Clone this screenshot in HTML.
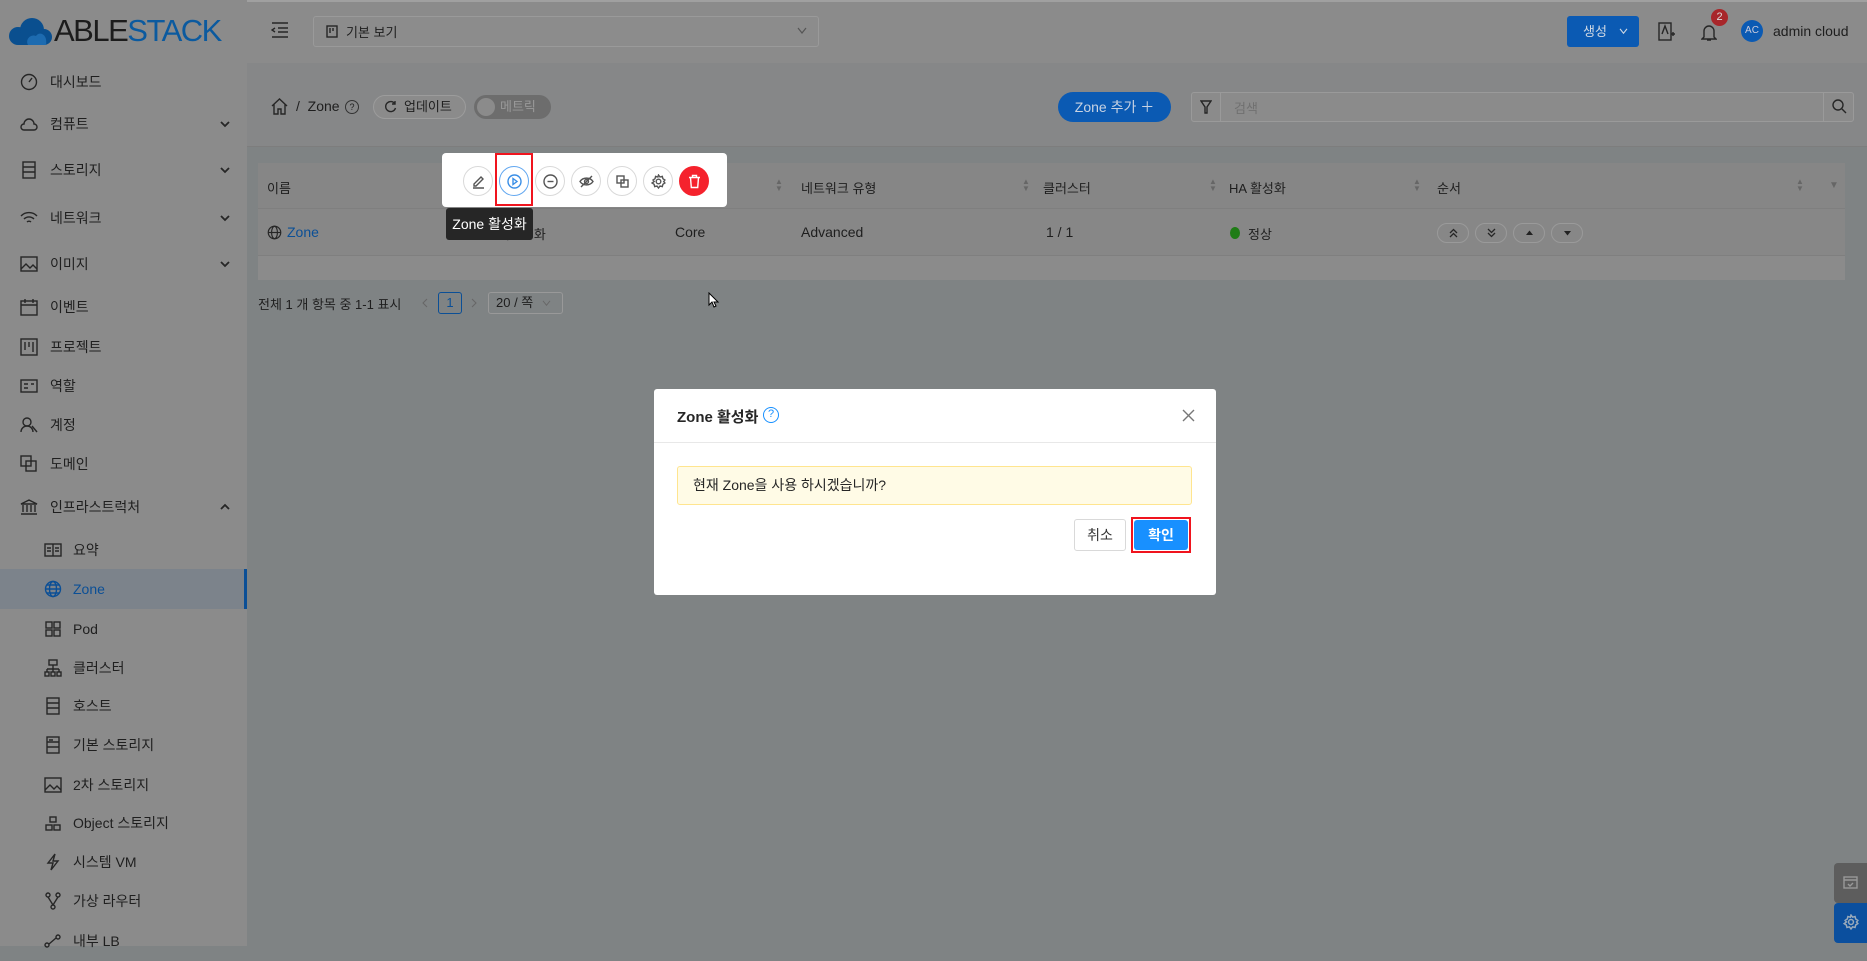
<!DOCTYPE html>
<html><head><meta charset="utf-8"><style>
*{box-sizing:border-box;margin:0;padding:0}
body{width:1867px;height:946px;overflow:hidden;background:#7f8384;font-family:"Liberation Sans","Noto Sans CJK KR",sans-serif;color:#1e1e1e;position:relative;font-size:14px}
.abs{position:absolute}
#side{left:0;top:0;width:247px;height:946px;background:#8b8b8b}
#hdr{left:247px;top:0;width:1620px;height:63px;background:#8b8b8b;border-top:2px solid #a0a0a0}
.it{position:absolute;left:0;width:247px;height:40px;display:flex;align-items:center;font-size:14px;color:#1f1f1f}
.it svg{position:absolute;left:20px;width:18px;height:18px}
.it span{position:absolute;left:50px}
.it.sub svg{left:44px}
.it.sub span{left:73px}
.it svg.chev{left:220px;width:10px;height:10px;stroke-width:1.8}
svg{fill:none;stroke:#262626;stroke-width:1.4}
.btn{position:absolute;border-radius:50%;width:30px;height:30px;border:1px solid #d9d9d9;background:#fff;top:166px}
.btn svg{position:absolute;left:7px;top:7px;width:15px;height:15px;stroke:#555}
.ob{position:absolute;top:223px;width:32px;height:20px;border:1px solid #9a9a9a;border-radius:10px}
.ob svg{position:absolute;left:11px;top:4px;width:9px;height:10px;stroke-width:1.3}
</style></head><body>
<div id="side" class="abs"></div>
<div id="hdr" class="abs"></div>
<!-- logo -->
<svg class="abs" style="left:6px;top:17px;width:48px;height:30px;stroke:none" viewBox="0 0 48 30"><circle cx="12" cy="19" r="9" fill="#0a4f8f"/><circle cx="26" cy="13" r="12" fill="#0a4f8f"/><circle cx="38" cy="20" r="8" fill="#0a4f8f"/><rect x="12" y="18" width="26" height="10" fill="#0a4f8f"/><path d="M22 28c-3-6 3-11 8-9 3-5 12-2 10 9z" fill="#1d6bb0"/></svg>
<div class="abs" style="left:54px;top:13px;font-size:31px;letter-spacing:-1.5px;color:#1c1c1c">ABLE<span style="color:#0b5a9f">STACK</span></div>
<!-- menu icon -->
<svg class="abs" style="left:271px;top:21px;width:18px;height:18px" viewBox="0 0 18 18"><path d="M1 2h16M7 7h10M7 11h10M1 16h16M4 7l-3 2 3 2"/></svg>
<div class="abs" style="left:313px;top:16px;width:506px;height:31px;border:1px solid #9a9a9a;border-radius:3px;background:#8c8c8c"></div>
<svg class="abs" style="left:326px;top:25px;width:12px;height:13px" viewBox="0 0 12 13"><rect x="1" y="1" width="10" height="11"/><path d="M4 3v5M7 3v3"/></svg>
<div class="abs" style="left:346px;top:22px;font-size:13px">기본 보기</div>
<svg class="abs" style="left:797px;top:27px;width:10px;height:8px;stroke:#555;stroke-width:1.2" viewBox="0 0 10 8"><path d="M1 1l4 5 4-5"/></svg>
<div class="abs" style="left:1567px;top:16px;width:72px;height:31px;background:#0b5ab3;border-radius:3px;color:#cfd8e3;font-size:13px;line-height:31px;padding-left:16px">생성</div>
<svg class="abs" style="left:1619px;top:28px;width:9px;height:7px;stroke:#cfd8e3;stroke-width:1.2" viewBox="0 0 10 8"><path d="M1 1l4 5 4-5"/></svg>
<svg class="abs" style="left:1658px;top:22px;width:18px;height:20px" viewBox="0 0 18 20"><rect x="1" y="1" width="12" height="17"/><path d="M4 12l3-8 3 8M13 12h4M15 10v4"/></svg>
<svg class="abs" style="left:1701px;top:23px;width:16px;height:19px" viewBox="0 0 16 19"><path d="M3 14V8a5 5 0 0 1 10 0v6l2 2H1zM6 17h4"/></svg>
<div class="abs" style="left:1711px;top:9px;width:17px;height:17px;border-radius:50%;background:#a8262a;color:#ddd;font-size:11px;text-align:center;line-height:17px">2</div>
<div class="abs" style="left:1741px;top:20px;width:22px;height:22px;border-radius:50%;background:#0b5ab3;color:#ccd;font-size:10px;text-align:center;line-height:22px">AC</div>
<div class="abs" style="left:1773px;top:23px;font-size:14px">admin cloud</div>
<!-- sidebar items -->
<div class="it" style="top:62px"><svg viewBox="0 0 18 18"><circle cx="9" cy="9" r="7.5"/><path d="M9 9l3-4"/></svg><span>대시보드</span></div>
<div class="it" style="top:104px"><svg viewBox="0 0 18 18"><path d="M4 15a3 3 0 0 1 0-6 5 5 0 0 1 10 0 3 3 0 0 1 0 6z"/></svg><span>컴퓨트</span><svg class="chev" viewBox="0 0 10 10"><path d="M1 3l4 4 4-4"/></svg></div>
<div class="it" style="top:150px"><svg viewBox="0 0 18 18"><rect x="3" y="1" width="12" height="16"/><path d="M3 6h12M3 11h12"/></svg><span>스토리지</span><svg class="chev" viewBox="0 0 10 10"><path d="M1 3l4 4 4-4"/></svg></div>
<div class="it" style="top:198px"><svg viewBox="0 0 18 18"><path d="M1 7a11 11 0 0 1 16 0M4 10a7 7 0 0 1 10 0M7 13a3 3 0 0 1 4 0"/></svg><span>네트워크</span><svg class="chev" viewBox="0 0 10 10"><path d="M1 3l4 4 4-4"/></svg></div>
<div class="it" style="top:244px"><svg viewBox="0 0 18 18"><rect x="1" y="2" width="16" height="14"/><path d="M1 14l5-5 4 4 3-3 4 4"/></svg><span>이미지</span><svg class="chev" viewBox="0 0 10 10"><path d="M1 3l4 4 4-4"/></svg></div>
<div class="it" style="top:287px"><svg viewBox="0 0 18 18"><rect x="1" y="3" width="16" height="14"/><path d="M5 1v4M13 1v4M1 7h16"/></svg><span>이벤트</span></div>
<div class="it" style="top:327px"><svg viewBox="0 0 18 18"><rect x="1" y="1" width="16" height="16"/><path d="M5 4v8M9 4v5M13 4v10"/></svg><span>프로젝트</span></div>
<div class="it" style="top:366px"><svg viewBox="0 0 18 18"><rect x="1" y="3" width="16" height="12"/><path d="M4 7h4M4 11h4M11 7h3"/></svg><span>역할</span></div>
<div class="it" style="top:405px"><svg viewBox="0 0 18 18"><circle cx="7" cy="6" r="4"/><path d="M1 16a6 6 0 0 1 12 0M12 10l5 6"/></svg><span>계정</span></div>
<div class="it" style="top:444px"><svg viewBox="0 0 18 18"><rect x="1" y="1" width="10" height="10"/><rect x="6" y="6" width="10" height="10"/></svg><span>도메인</span></div>
<div class="it" style="top:487px"><svg viewBox="0 0 18 18"><path d="M1 6l8-4 8 4zM3 7v7M7 7v7M11 7v7M15 7v7M1 16h16"/></svg><span>인프라스트럭처</span><svg class="chev" viewBox="0 0 10 10"><path d="M1 7l4-4 4 4"/></svg></div>
<div class="it sub" style="top:530px"><svg viewBox="0 0 18 18"><rect x="1" y="3" width="16" height="12"/><path d="M9 3v12M3 7h4M11 7h4M3 10h4M11 10h4"/></svg><span>요약</span></div>
<div class="abs" style="left:0;top:569px;width:247px;height:40px;background:#7c838b;border-right:3px solid #0b4f96"></div>
<div class="it sub" style="top:569px;color:#0b4f96"><svg viewBox="0 0 18 18" style="stroke:#0b4f96"><circle cx="9" cy="9" r="7.5"/><ellipse cx="9" cy="9" rx="3.5" ry="7.5"/><path d="M1.5 9h15M3 5h12M3 13h12"/></svg><span>Zone</span></div>
<div class="it sub" style="top:609px"><svg viewBox="0 0 18 18"><rect x="2" y="2" width="6" height="6"/><rect x="10" y="2" width="6" height="6"/><rect x="2" y="10" width="6" height="6"/><rect x="10" y="10" width="6" height="6"/></svg><span>Pod</span></div>
<div class="it sub" style="top:648px"><svg viewBox="0 0 18 18"><rect x="5" y="1" width="8" height="5"/><path d="M9 6v4M3 10h12M3 10v3M9 10v3M15 10v3"/><rect x="1" y="13" width="4" height="4"/><rect x="7" y="13" width="4" height="4"/><rect x="13" y="13" width="4" height="4"/></svg><span>클러스터</span></div>
<div class="it sub" style="top:686px"><svg viewBox="0 0 18 18"><rect x="3" y="1" width="12" height="16"/><path d="M3 6h12M3 11h12"/></svg><span>호스트</span></div>
<div class="it sub" style="top:725px"><svg viewBox="0 0 18 18"><rect x="3" y="1" width="12" height="16"/><path d="M3 6h12M3 11h12M5 4h4"/></svg><span>기본 스토리지</span></div>
<div class="it sub" style="top:765px"><svg viewBox="0 0 18 18"><rect x="1" y="2" width="16" height="14"/><path d="M1 14l5-5 4 4 3-3 4 4"/></svg><span>2차 스토리지</span></div>
<div class="it sub" style="top:803px"><svg viewBox="0 0 18 18"><rect x="6" y="3" width="6" height="5"/><rect x="2" y="11" width="6" height="5"/><rect x="10" y="11" width="6" height="5"/></svg><span>Object 스토리지</span></div>
<div class="it sub" style="top:842px"><svg viewBox="0 0 18 18"><path d="M11 1L4 10h5l-2 7 7-9H9z"/></svg><span>시스템 VM</span></div>
<div class="it sub" style="top:881px"><svg viewBox="0 0 18 18"><circle cx="4" cy="3" r="2"/><circle cx="14" cy="3" r="2"/><circle cx="9" cy="15" r="2"/><path d="M4 5l5 8M14 5l-5 8"/></svg><span>가상 라우터</span></div>
<div class="it sub" style="top:921px"><svg viewBox="0 0 18 18"><circle cx="3" cy="13" r="2"/><circle cx="14" cy="5" r="2"/><path d="M5 12l7-6"/></svg><span>내부 LB</span></div>
<!-- page header -->
<div class="abs" style="left:247px;top:63px;width:1620px;height:84px;background:#868788;border-bottom:1px solid #7d7d7d"></div>
<svg class="abs" style="left:271px;top:98px;width:17px;height:17px" viewBox="0 0 17 17"><path d="M1 8l7.5-7 7.5 7M3 6v10h4v-5h3v5h4V6"/></svg>
<div class="abs" style="left:296px;top:98px;font-size:14px">/&nbsp;&nbsp;Zone</div>
<div class="abs" style="left:345px;top:100px;width:14px;height:14px;border:1px solid #333;border-radius:50%;font-size:9px;text-align:center;line-height:12px">?</div>
<div class="abs" style="left:373px;top:95px;width:93px;height:24px;border:1px solid #9c9c9c;border-radius:12px;background:#8b8b8b;font-size:13px;line-height:22px;padding-left:30px">업데이트</div>
<svg class="abs" style="left:384px;top:100px;width:13px;height:13px" viewBox="0 0 13 13"><path d="M11 4A5 5 0 1 0 11.5 8M11 1v3H8"/></svg>
<div class="abs" style="left:474px;top:95px;width:77px;height:24px;border-radius:12px;background:#6d6d6d;color:#999;font-size:13px;line-height:24px;padding-left:26px">메트릭</div>
<div class="abs" style="left:477px;top:98px;width:18px;height:18px;border-radius:50%;background:#8b8b8b"></div>
<div class="abs" style="left:1058px;top:92px;width:113px;height:30px;border-radius:15px;background:#0b5ab3;color:#c8d3e3;font-size:14px;line-height:30px;text-align:center">Zone 추가 ＋</div>
<div class="abs" style="left:1191px;top:92px;width:663px;height:30px;border:1px solid #9a9a9a;border-radius:3px;background:#8b8b8b"></div>
<div class="abs" style="left:1191px;top:92px;width:30px;height:30px;border-right:1px solid #9a9a9a"></div>
<svg class="abs" style="left:1200px;top:100px;width:12px;height:14px" viewBox="0 0 12 14"><path d="M1 1h10L7 7v6H5V7z"/></svg>
<div class="abs" style="left:1234px;top:98px;font-size:13px;color:#707070">검색</div>
<div class="abs" style="left:1823px;top:92px;width:31px;height:30px;border-left:1px solid #9a9a9a"></div>
<svg class="abs" style="left:1832px;top:99px;width:15px;height:15px" viewBox="0 0 15 15"><circle cx="6" cy="6" r="5"/><path d="M10 10l4 4"/></svg>
<!-- table -->
<div class="abs" style="left:258px;top:163px;width:1587px;height:117px;background:#8b8b8b"></div>
<div class="abs" style="left:258px;top:163px;width:1587px;height:46px;background:#868686;border-bottom:1px solid #7f7f7f"></div>
<div class="abs" style="left:258px;top:209px;width:1587px;height:47px;background:#878787;border-bottom:1px solid #7f7f7f"></div>
<div class="abs" style="left:267px;top:178px;font-size:13px">이름</div>
<div class="abs" style="left:801px;top:178px;font-size:13px">네트워크 유형</div>
<div class="abs" style="left:1043px;top:178px;font-size:13px">클러스터</div>
<div class="abs" style="left:1229px;top:178px;font-size:13px">HA 활성화</div>
<div class="abs" style="left:1437px;top:178px;font-size:13px">순서</div>
<div class="abs" style="left:775px;top:178px;font-size:8px;line-height:7px;color:#666">▲<br>▼</div>
<div class="abs" style="left:1022px;top:178px;font-size:8px;line-height:7px;color:#666">▲<br>▼</div>
<div class="abs" style="left:1209px;top:178px;font-size:8px;line-height:7px;color:#666">▲<br>▼</div>
<div class="abs" style="left:1413px;top:178px;font-size:8px;line-height:7px;color:#666">▲<br>▼</div>
<div class="abs" style="left:1796px;top:178px;font-size:8px;line-height:7px;color:#666">▲<br>▼</div>
<div class="abs" style="left:1829px;top:180px;font-size:10px;color:#666">▼</div>
<svg class="abs" style="left:267px;top:225px;width:15px;height:15px" viewBox="0 0 18 18"><circle cx="9" cy="9" r="7.5"/><ellipse cx="9" cy="9" rx="3.5" ry="7.5"/><path d="M1.5 9h15"/></svg>
<div class="abs" style="left:287px;top:224px;font-size:14px;color:#0b4f96">Zone</div>
<div class="abs" style="left:482px;top:227px;width:9px;height:9px;border-radius:50%;background:#6c0f0f"></div>
<div class="abs" style="left:498px;top:224px;font-size:13px">비활성화</div>
<div class="abs" style="left:675px;top:224px;font-size:14px">Core</div>
<div class="abs" style="left:801px;top:224px;font-size:14px">Advanced</div>
<div class="abs" style="left:1046px;top:224px;font-size:14px">1 / 1</div>
<div class="abs" style="left:1230px;top:227px;width:10px;height:12px;border-radius:50%;background:#1f7c16"></div>
<div class="abs" style="left:1248px;top:224px;font-size:13px">정상</div>
<div class="ob" style="left:1437px"><svg viewBox="0 0 9 10"><path d="M1 5l3.5-3.5L8 5M1 9l3.5-3.5L8 9"/></svg></div>
<div class="ob" style="left:1475px"><svg viewBox="0 0 9 10"><path d="M1 1l3.5 3.5L8 1M1 5l3.5 3.5L8 5"/></svg></div>
<div class="ob" style="left:1513px"><svg viewBox="0 0 9 10" style="fill:#222;stroke:none"><path d="M1 7l3.5-4.5L8 7z"/></svg></div>
<div class="ob" style="left:1551px"><svg viewBox="0 0 9 10" style="fill:#222;stroke:none"><path d="M1 3l3.5 4.5L8 3z"/></svg></div>
<!-- pagination -->
<div class="abs" style="left:258px;top:294px;font-size:13px">전체 1 개 항목 중 1-1 표시</div>
<svg class="abs" style="left:422px;top:298px;width:6px;height:10px;stroke:#666;stroke-width:1" viewBox="0 0 6 10"><path d="M5 1L1 5l4 4"/></svg>
<div class="abs" style="left:438px;top:292px;width:24px;height:22px;border:1px solid #0b4f96;border-radius:3px;color:#0b4f96;font-size:13px;text-align:center;line-height:20px">1</div>
<svg class="abs" style="left:471px;top:298px;width:6px;height:10px;stroke:#666;stroke-width:1" viewBox="0 0 6 10"><path d="M1 1l4 4-4 4"/></svg>
<div class="abs" style="left:488px;top:292px;width:75px;height:22px;border:1px solid #999;border-radius:3px;font-size:13px;line-height:20px;padding-left:7px">20 / 쪽</div>
<svg class="abs" style="left:542px;top:300px;width:9px;height:7px;stroke:#666;stroke-width:1.1" viewBox="0 0 10 8"><path d="M1 1l4 5 4-5"/></svg>
<!-- popover -->
<div class="abs" style="left:442px;top:153px;width:285px;height:54px;background:#fff;border-radius:4px"></div>
<div class="btn" style="left:463px"><svg viewBox="0 0 15 15"><path d="M3 10l7-7 2 2-7 7H3zM2 14h11"/></svg></div>
<div class="btn" style="left:499px;border-color:#63a8f0"><svg viewBox="0 0 15 15" style="stroke:#3a8ee6"><circle cx="7.5" cy="7.5" r="6.5"/><path d="M6 4.5l4 3-4 3z"/></svg></div>
<div class="btn" style="left:535px"><svg viewBox="0 0 15 15"><circle cx="7.5" cy="7.5" r="6.5"/><path d="M4.5 7.5h6"/></svg></div>
<div class="btn" style="left:571px"><svg viewBox="0 0 15 15"><path d="M1 7.5C4 3 11 3 14 7.5 11 12 4 12 1 7.5zM2 13L13 2"/><circle cx="7.5" cy="7.5" r="2"/></svg></div>
<div class="btn" style="left:607px"><svg viewBox="0 0 15 15"><rect x="2" y="2" width="7" height="7"/><rect x="6" y="6" width="7" height="7"/></svg></div>
<div class="btn" style="left:643px"><svg viewBox="0 0 15 15"><circle cx="7.5" cy="7.5" r="2.3"/><path d="M7.5 1l1.5 2 2.3-.6.6 2.3 2 1.3-1.2 1.5 1.2 1.5-2 1.3-.6 2.3-2.3-.6-1.5 2-1.5-2-2.3.6-.6-2.3-2-1.3L3.2 7.5 2 6l2-1.3.6-2.3 2.3.6z"/></svg></div>
<div class="btn" style="left:679px;background:#f5222d;border-color:#f5222d"><svg viewBox="0 0 15 15" style="stroke:#fff"><path d="M2 3.5h11M5.5 3.5V1.5h4v2M3.5 3.5l.8 10h6.4l.8-10"/></svg></div>
<div class="abs" style="left:495px;top:153px;width:38px;height:53px;border:2px solid #f0141e"></div>
<div class="abs" style="left:446px;top:208px;width:87px;height:32px;background:#262626;border-radius:3px;color:#fff;font-size:14px;line-height:32px;text-align:center">Zone 활성화</div>
<!-- modal -->
<div class="abs" style="left:654px;top:389px;width:562px;height:206px;background:#fff;border-radius:3px"></div>
<div class="abs" style="left:654px;top:442px;width:562px;height:1px;background:#e8e8e8"></div>
<div class="abs" style="left:677px;top:406px;font-size:15px;font-weight:bold;color:#262626">Zone 활성화</div>
<div class="abs" style="left:763px;top:407px;width:16px;height:16px;border:1.5px solid #1890ff;border-radius:50%;color:#1890ff;font-size:11px;text-align:center;line-height:13px">?</div>
<svg class="abs" style="left:1182px;top:409px;width:13px;height:13px;stroke:#777" viewBox="0 0 13 13"><path d="M1 1l11 11M12 1L1 12"/></svg>
<div class="abs" style="left:677px;top:466px;width:515px;height:39px;background:#fffbe6;border:1px solid #ffe58f;border-radius:3px;font-size:14px;line-height:37px;padding-left:15px;color:#262626">현재 Zone을 사용 하시겠습니까?</div>
<div class="abs" style="left:1074px;top:519px;width:52px;height:32px;border:1px solid #d9d9d9;border-radius:3px;font-size:14px;line-height:30px;text-align:center;color:#333">취소</div>
<div class="abs" style="left:1131px;top:517px;width:60px;height:36px;border:2px solid #f0141e"></div>
<div class="abs" style="left:1134px;top:520px;width:54px;height:30px;background:#1890ff;border-radius:3px;font-size:14px;font-weight:bold;line-height:30px;text-align:center;color:#fff">확인</div>
<!-- bottom right -->
<div class="abs" style="left:1834px;top:863px;width:33px;height:40px;background:#5d5d5d;border-radius:4px 0 0 4px"></div>
<svg class="abs" style="left:1843px;top:875px;width:15px;height:14px;stroke:#999" viewBox="0 0 15 14"><rect x="1" y="2" width="13" height="11"/><path d="M1 5h13M5 9l2 2 3-3"/></svg>
<div class="abs" style="left:1834px;top:903px;width:33px;height:40px;background:#0b4f9e;border-radius:4px 0 0 4px"></div>
<svg class="abs" style="left:1843px;top:914px;width:16px;height:16px;stroke:#9ab" viewBox="0 0 15 15"><circle cx="7.5" cy="7.5" r="2.3"/><path d="M7.5 1l1.5 2 2.3-.6.6 2.3 2 1.3-1.2 1.5 1.2 1.5-2 1.3-.6 2.3-2.3-.6-1.5 2-1.5-2-2.3.6-.6-2.3-2-1.3L3.2 7.5 2 6l2-1.3.6-2.3 2.3.6z"/></svg>
<svg class="abs" style="left:708px;top:292px;width:12px;height:16px;stroke:#000;fill:#fff;stroke-width:1" viewBox="0 0 12 16"><path d="M1 1v12l3-3 2 5 2-1-2-4h4z"/></svg>
</body></html>
